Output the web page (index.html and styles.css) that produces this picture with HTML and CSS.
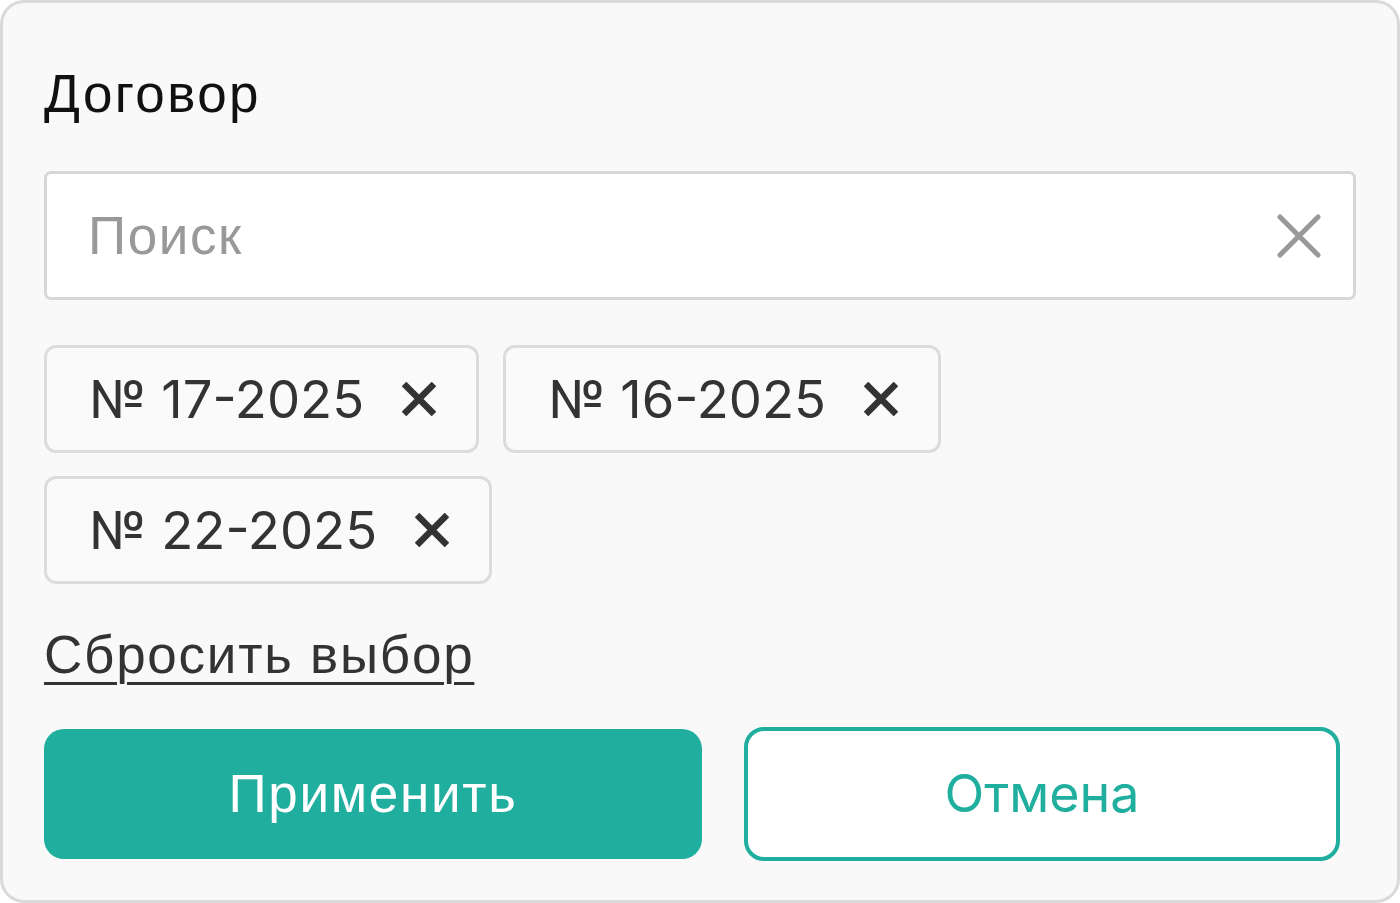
FILE: index.html
```html
<!DOCTYPE html>
<html lang="ru">
<head>
<meta charset="utf-8">
<title>Договор</title>
<link rel="stylesheet" href="styles.css">
</head>
<body>
<div class="panel">
  <h2 class="title">Договор</h2>
  <div class="search">
    <span class="placeholder">Поиск</span>
    <svg class="clear" viewBox="0 0 44 44" width="44" height="44" aria-hidden="true">
      <path d="M3 3 L41 41 M41 3 L3 41" stroke="#999" stroke-width="5" stroke-linecap="round" fill="none"/>
    </svg>
  </div>
  <div class="tags">
    <div class="tag"><span class="tag-text">№ 17-2025</span><svg class="tag-x" viewBox="0 0 34 34" width="34" height="34" aria-hidden="true"><path d="M2 2 L32 32 M32 2 L2 32" stroke="#333" stroke-width="6.5" fill="none"/></svg></div>
    <div class="tag"><span class="tag-text">№ 16-2025</span><svg class="tag-x" viewBox="0 0 34 34" width="34" height="34" aria-hidden="true"><path d="M2 2 L32 32 M32 2 L2 32" stroke="#333" stroke-width="6.5" fill="none"/></svg></div>
    <div class="tag"><span class="tag-text">№ 22-2025</span><svg class="tag-x" viewBox="0 0 34 34" width="34" height="34" aria-hidden="true"><path d="M2 2 L32 32 M32 2 L2 32" stroke="#333" stroke-width="6.5" fill="none"/></svg></div>
  </div>
  <a class="reset" href="#">Сбросить выбор</a>
  <div class="actions">
    <button class="btn apply" type="button">Применить</button>
    <button class="btn cancel" type="button">Отмена</button>
  </div>
</div>
</body>
</html>
```
FILE: styles.css
```css
* { box-sizing: border-box; }
html, body {
  margin: 0;
  padding: 0;
  background: #ffffff;
}
body {
  width: 1400px;
  height: 903px;
  overflow: hidden;
}
.panel {
  width: 1400px;
  height: 903px;
  background: #f9f9f9;
  border: 3px solid #dadada;
  border-radius: 24px;
  padding: 61px 41px 0 41px;
  font-family: "Liberation Sans", Arial, sans-serif;
}
.title {
  margin: 0;
  font-size: 53px;
  letter-spacing: 2.4px;
  font-weight: 400;
  line-height: 60px;
  color: #111;
}
.search {
  margin-top: 47px;
  height: 129px;
  background: #fff;
  border: 3px solid #d7d7d7;
  border-radius: 7px;
  display: flex;
  align-items: center;
  justify-content: space-between;
  padding: 0 32px 0 41px;
}
.placeholder {
  font-size: 53px;
  letter-spacing: 1.6px;
  line-height: 60px;
  color: #999;
}
.clear { display: block; }
.tags {
  margin-top: 45px;
  display: flex;
  flex-wrap: wrap;
  gap: 23px 24px;
  width: 960px;
}
.tag {
  height: 108px;
  border: 3px solid #dcdcdc;
  border-radius: 12px;
  background: #fafafa;
  display: flex;
  align-items: center;
  gap: 38px;
  padding: 0 40px 0 42px;
  font-family: Inter, "Liberation Sans", sans-serif;
  font-size: 52.6px;
  color: #333;
}
.tag-text { line-height: 60px; }
.tag-x { display: block; }
.reset {
  display: block;
  width: max-content;
  margin-top: 41px;
  font-size: 53px;
  letter-spacing: 1.75px;
  line-height: 60px;
  color: #333;
  text-decoration: underline;
  text-decoration-thickness: 3px;
  text-underline-offset: 9px;
}
.actions {
  margin-top: 42px;
  display: flex;
  align-items: center;
  gap: 42px;
}
.btn {
  margin: 0;
  padding: 0;
  border-radius: 20px;
  font-size: 52px;
  line-height: 60px;
  cursor: pointer;
}
.apply {
  width: 658px;
  height: 130px;
  background: #20ae9e;
  border: none;
  color: #fff;
  font-family: "Liberation Sans", Arial, sans-serif;
  font-size: 53px;
  letter-spacing: 1.7px;
}
.cancel {
  width: 596px;
  height: 134px;
  background: #fff;
  border: 4px solid #20ae9e;
  color: #20ae9e;
  font-family: Inter, "Liberation Sans", sans-serif;
}
```
